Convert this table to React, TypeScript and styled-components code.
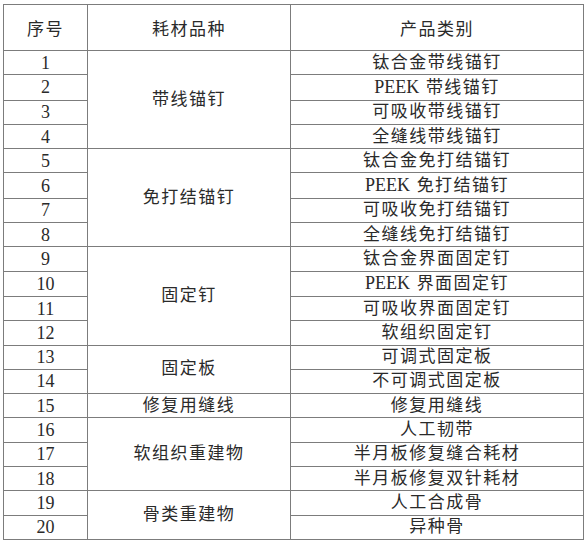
import React from "react";
import styled, { createGlobalStyle } from "styled-components";

const GlobalStyle = createGlobalStyle`
  html, body {
    margin: 0;
    padding: 0;
    background: #ffffff;
  }
  body {
    font-family: "Liberation Serif", "Noto Sans CJK SC", serif;
    color: #2a2a2a;
  }
`;

const Page = styled.div`
  padding: 4px 0 0 3px;
`;

const Table = styled.table`
  border-collapse: collapse;
  table-layout: fixed;
  width: 580px;
  height: 536px;
  border: 1px solid #8a8a8a;
`;

const HeadCell = styled.th`
  height: 45px;
  padding: 0;
  border: 1px solid #7c7c7c;
  font-weight: normal;
  font-size: 17px;
  letter-spacing: 1.5px;
  text-align: center;
  vertical-align: middle;
`;

const Cell = styled.td<{ $cjk?: boolean }>`
  height: 22px;
  padding: 0;
  border: 1px solid #7c7c7c;
  font-size: ${(p) => (p.$cjk ? "17px" : "18px")};
  line-height: 22px;
  letter-spacing: ${(p) => (p.$cjk ? "1.5px" : "0")};
  text-align: center;
  vertical-align: middle;
  white-space: nowrap;
`;

// latin words inside a chinese cell are not spaced out
const Latin = styled.span`
  font-size: 18px;
  letter-spacing: 0;
  margin-right: 1px;
`;

type Group = { kind: string; items: string[] };

const groups: Group[] = [
  { kind: "带线锚钉", items: ["钛合金带线锚钉", "PEEK 带线锚钉", "可吸收带线锚钉", "全缝线带线锚钉"] },
  { kind: "免打结锚钉", items: ["钛合金免打结锚钉", "PEEK 免打结锚钉", "可吸收免打结锚钉", "全缝线免打结锚钉"] },
  { kind: "固定钉", items: ["钛合金界面固定钉", "PEEK 界面固定钉", "可吸收界面固定钉", "软组织固定钉"] },
  { kind: "固定板", items: ["可调式固定板", "不可调式固定板"] },
  { kind: "修复用缝线", items: ["修复用缝线"] },
  { kind: "软组织重建物", items: ["人工韧带", "半月板修复缝合耗材", "半月板修复双针耗材"] },
  { kind: "骨类重建物", items: ["人工合成骨", "异种骨"] },
];

function ItemText({ text }: { text: string }): React.ReactElement {
  if (text.startsWith("PEEK ")) {
    return (
      <>
        <Latin>PEEK</Latin> {text.slice(5)}
      </>
    );
  }
  return <>{text}</>;
}

export default function App(): React.ReactElement {
  let n = 0;
  return (
    <Page>
      <GlobalStyle />
      <Table>
        <colgroup>
          <col style={{ width: 84 }} />
          <col style={{ width: 203 }} />
          <col style={{ width: 293 }} />
        </colgroup>
        <thead>
          <tr>
            <HeadCell>序号</HeadCell>
            <HeadCell>耗材品种</HeadCell>
            <HeadCell>产品类别</HeadCell>
          </tr>
        </thead>
        <tbody>
          {groups.map((g) =>
            g.items.map((item, i) => {
              n += 1;
              return (
                <tr key={n}>
                  <Cell>{n}</Cell>
                  {i === 0 && (
                    <Cell $cjk rowSpan={g.items.length}>
                      {g.kind}
                    </Cell>
                  )}
                  <Cell $cjk>
                    <ItemText text={item} />
                  </Cell>
                </tr>
              );
            })
          )}
        </tbody>
      </Table>
    </Page>
  );
}
